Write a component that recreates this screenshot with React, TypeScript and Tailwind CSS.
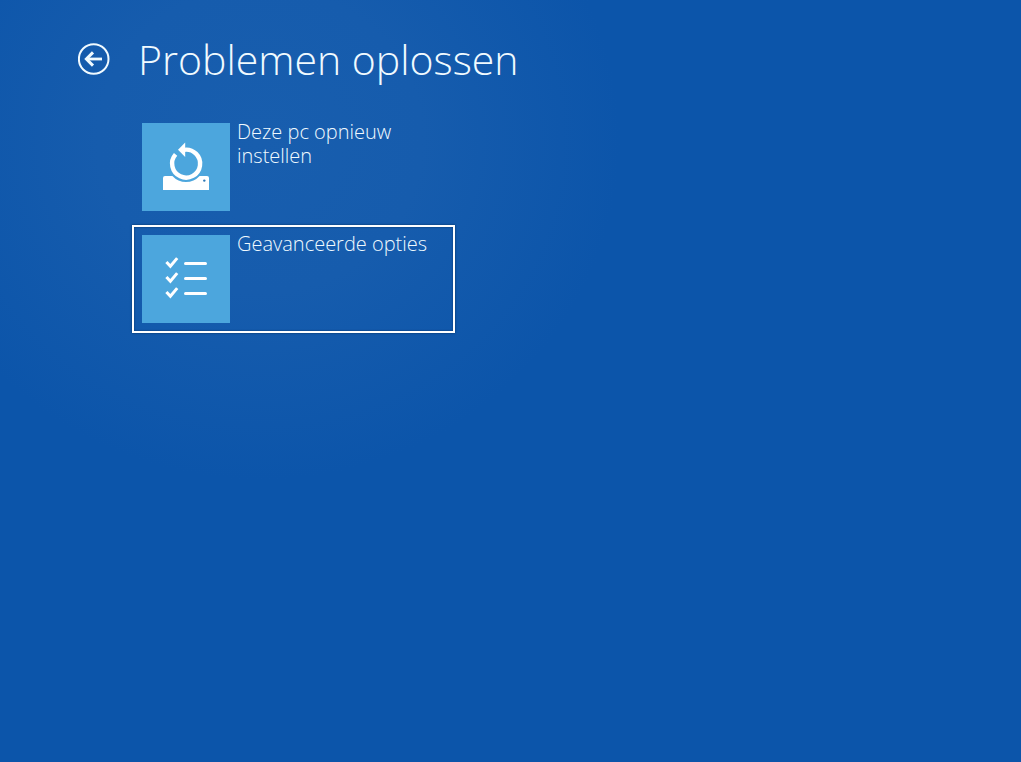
import type { ReactNode } from "react";

function BackIcon() {
  return (
    <svg viewBox="0 0 32 32" className="size-8" fill="none" stroke="currentColor" aria-hidden="true">
      <circle cx="15.7" cy="16" r="14.8" strokeWidth="2" />
      <path d="M24 16H9" strokeWidth="2.8" />
      <path d="M15 9.4L8.4 16l6.6 6.6" strokeWidth="3" />
    </svg>
  );
}

function ResetIcon() {
  return (
    <svg viewBox="0 0 88 88" className="size-full text-white" aria-hidden="true">
      <path
        fill="currentColor"
        d="M23 53H30.4A18.3 18.3 0 0 0 57.6 53H65Q67 53 67 55V67H21V55Q21 53 23 53Z"
      />
      <path d="M33.6 31.4A14 14 0 1 0 42 26.8" fill="none" stroke="currentColor" strokeWidth="4.4" />
      <path d="M36 26.8L43.2 19.6V34Z" fill="currentColor" />
      <circle cx="62.3" cy="57.6" r="1.2" fill="#2f78b5" />
    </svg>
  );
}

function ChecklistIcon() {
  return (
    <svg
      viewBox="0 0 88 88"
      className="size-full text-white"
      fill="none"
      stroke="currentColor"
      strokeWidth="3"
      aria-hidden="true"
    >
      {[28.5, 43.5, 58.5].map((y) => (
        <g key={y} transform={`translate(0 ${y})`}>
          <path d="M24.4 -1.6L28.4 2.8L35.2 -5.4" />
          <path d="M43.5 0H63.5" strokeLinecap="round" />
        </g>
      ))}
    </svg>
  );
}

function OptionTile({ label, icon, selected }: { label: string; icon: ReactNode; selected?: boolean }) {
  return (
    <button
      type="button"
      className={`flex w-full items-start gap-[7px] border-2 p-2 text-left ${
        selected ? "border-white shadow-[0_0_2px_#04305f,inset_0_0_2px_#04305f]" : "border-transparent"
      }`}
    >
      <span className="size-22 shrink-0 bg-[#4ca6dd]">{icon}</span>
      <span className="-mt-[3px] max-w-48 text-xl/6 font-light">{label}</span>
    </button>
  );
}

export default function App() {
  return (
    <main className="min-h-screen bg-[#0c55aa] bg-[radial-gradient(ellipse_360px_340px_at_260px_140px,#185eae_0%,#165cad_45%,#0c55aa_100%)] px-[78px] pt-8 font-['Open_Sans',sans-serif] text-[#f0faff]">
      <header className="flex items-center gap-7">
        <button type="button" aria-label="Terug" className="shrink-0">
          <BackIcon />
        </button>
        <h1 className="text-[41px]/[54px] font-light">Problemen oplossen</h1>
      </header>
      <nav aria-label="Problemen oplossen" className="mt-[27px] ml-[54px] flex max-w-[323px] flex-col gap-1">
        <OptionTile label="Deze pc opnieuw instellen" icon={<ResetIcon />} />
        <OptionTile label="Geavanceerde opties" icon={<ChecklistIcon />} selected />
      </nav>
    </main>
  );
}
